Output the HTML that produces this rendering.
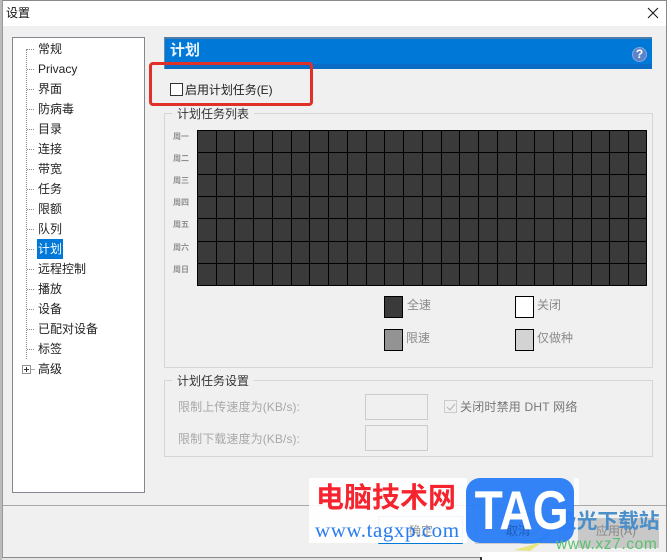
<!DOCTYPE html>
<html lang="zh"><head><meta charset="utf-8"><title>设置</title>
<style>
html,body{margin:0;padding:0;background:#fff}
#p{position:relative;width:671px;height:560px;overflow:hidden;background:#fff;font:12px/16px "Liberation Sans","Noto Sans CJK SC",sans-serif;color:#222}
#p div{position:absolute;white-space:nowrap}
.t{left:38px;height:16px}
.g{color:#a8a8a8}
.b{border:1px solid #d6d6d6;box-sizing:border-box}
.l{font-size:8px;line-height:10px;color:#909090;left:173px;font-weight:bold}
.sw{width:17px;height:20px;border:1px solid #000}
.lg{color:#8a8a8a}
</style></head><body><div id="p">
<div style="left:0;top:558px;width:480px;height:2px;background:#e4e4e4"></div>
<div style="left:2px;top:0;width:665px;height:558px;background:#f0f0f0;border:1px solid #8a8a8a;border-left-color:#999;box-sizing:border-box"></div>
<div style="left:3px;top:1px;width:663px;height:25px;background:#fff"></div>
<div style="left:0;top:0;width:2px;height:560px;background:#bbb"></div>
<div style="left:6px;top:5px;font-size:12px;color:#111">设置</div>
<svg style="position:absolute;left:647px;top:7px" width="12" height="12"><path d="M1 1L11 11M11 1L1 11" stroke="#111" stroke-width="1" fill="none"/></svg>

<div style="left:12px;top:37px;width:133px;height:456px;background:#fff;border:1px solid #828790;box-sizing:border-box"></div>
<div style="left:26px;top:49px;height:310px;border-left:1px dotted #888"></div>
<div class="t" style="top:41px">常规</div>
<div class="t" style="top:61px">Privacy</div>
<div class="t" style="top:81px">界面</div>
<div class="t" style="top:101px">防病毒</div>
<div class="t" style="top:121px">目录</div>
<div class="t" style="top:141px">连接</div>
<div class="t" style="top:161px">带宽</div>
<div class="t" style="top:181px">任务</div>
<div class="t" style="top:201px">限额</div>
<div class="t" style="top:221px">队列</div>
<div style="left:37px;top:239px;width:26px;height:20px;background:#0078d7"></div>
<div class="t" style="top:241px;color:#fff">计划</div>
<div class="t" style="top:261px">远程控制</div>
<div class="t" style="top:281px">播放</div>
<div class="t" style="top:301px">设备</div>
<div class="t" style="top:321px">已配对设备</div>
<div class="t" style="top:341px">标签</div>
<div class="t" style="top:361px">高级</div>
<svg style="position:absolute;left:26px;top:49px" width="10" height="312"><path d="M1 .5H9M1 20.5H9M1 40.5H9M1 60.5H9M1 80.5H9M1 100.5H9M1 120.5H9M1 140.5H9M1 160.5H9M1 180.5H9M1 200.5H9M1 220.5H9M1 240.5H9M1 260.5H9M1 280.5H9M1 300.5H9" stroke="#888" stroke-dasharray="1 1" fill="none"/></svg>
<div style="left:22px;top:365px;width:9px;height:9px;background:#fff;border:1px solid #919191;box-sizing:border-box"></div>
<div style="left:24px;top:369px;width:5px;height:1px;background:#333"></div>
<div style="left:26px;top:367px;width:1px;height:5px;background:#333"></div>
<div style="left:31px;top:369px;width:4px;height:1px;background:#aaa"></div>

<div style="left:164px;top:37px;width:488px;height:32px;background:#0078d7;border-top:2px solid #4d7da6;border-left:1px solid #6b8aa5;box-sizing:border-box"></div>
<div style="left:165px;top:64px;width:487px;height:5px;background:#0a6cc4"></div>
<div style="left:170px;top:42px;font-size:15px;line-height:18px;font-weight:bold;color:#e8f3fc">计划</div>
<div style="left:632px;top:47px;width:13px;height:13px;border-radius:50%;background:#5c83c9;border:1px solid #8aa9dc;color:#fff;font:bold 12px/13px 'Liberation Sans',sans-serif;text-align:center">?</div>

<div style="left:170px;top:83px;width:13px;height:13px;background:#fff;border:1px solid #333;box-sizing:border-box"></div>
<div style="left:185px;top:82px;color:#222;letter-spacing:-.05px">启用计划任务(E)</div>
<div style="left:149px;top:62px;width:164px;height:44px;border:3px solid #e0302a;border-radius:4px;box-sizing:border-box"></div>

<div class="b" style="left:164px;top:113px;width:489px;height:255px"></div>
<div style="left:172px;top:106px;background:#f0f0f0;padding:0 5px;color:#333">计划任务列表</div>
<div class="l" style="top:132px">周一</div>
<div class="l" style="top:154px">周二</div>
<div class="l" style="top:176px">周三</div>
<div class="l" style="top:198px">周四</div>
<div class="l" style="top:220px">周五</div>
<div class="l" style="top:243px">周六</div>
<div class="l" style="top:265px">周日</div>
<svg style="position:absolute;left:197px;top:130px" width="451" height="157" shape-rendering="crispEdges">
<rect x="0" y="0" width="450" height="156" fill="#3a3a3a"/>
<path d="M.5 0V156M19.5 0V156M37.5 0V156M56.5 0V156M75.5 0V156M94.5 0V156M112.5 0V156M131.5 0V156M150.5 0V156M169.5 0V156M187.5 0V156M206.5 0V156M225.5 0V156M244.5 0V156M262.5 0V156M281.5 0V156M300.5 0V156M319.5 0V156M337.5 0V156M356.5 0V156M375.5 0V156M394.5 0V156M412.5 0V156M431.5 0V156M449.5 0V156M0 .5H450M0 22.5H450M0 44.5H450M0 66.5H450M0 88.5H450M0 111.5H450M0 133.5H450M0 155.5H450" stroke="#000" fill="none"/>
</svg>

<div class="sw" style="left:384px;top:296px;background:#3a3a3a"></div>
<div class="lg" style="left:407px;top:297px">全速</div>
<div class="sw" style="left:515px;top:296px;background:#fff"></div>
<div class="lg" style="left:537px;top:297px">关闭</div>
<div class="sw" style="left:384px;top:329px;background:#939393"></div>
<div class="lg" style="left:406px;top:330px">限速</div>
<div class="sw" style="left:515px;top:329px;background:#d3d3d3"></div>
<div class="lg" style="left:537px;top:330px">仅做种</div>

<div class="b" style="left:164px;top:380px;width:489px;height:77px"></div>
<div style="left:172px;top:373px;background:#f0f0f0;padding:0 5px;color:#333">计划任务设置</div>
<div class="g" style="left:178px;top:399px;letter-spacing:.1px">限制上传速度为(KB/s):</div>
<div class="g" style="left:178px;top:431px;letter-spacing:.1px">限制下载速度为(KB/s):</div>
<div class="b" style="left:365px;top:394px;width:63px;height:26px;border-color:#ccc"></div>
<div class="b" style="left:365px;top:425px;width:63px;height:26px;border-color:#ccc"></div>
<div class="b" style="left:444px;top:400px;width:13px;height:13px;border-color:#ccc"></div>
<svg style="position:absolute;left:445px;top:401px" width="12" height="12"><path d="M2 6L5 9L10 3" stroke="#b5b5b5" fill="none"/></svg>
<div style="left:460px;top:399px;color:#777;letter-spacing:.2px">关闭时禁用 DHT 网络</div>

<div style="left:3px;top:505px;width:663px;height:1px;background:#a8a8a8"></div>
<div style="left:378px;top:516px;width:85px;height:28px;border:1px solid #7eb4d8;border-bottom:1px solid #0078d7;box-sizing:border-box"></div>
<div style="left:475px;top:516px;width:85px;height:28px;border:1px solid #ccc;box-sizing:border-box"></div>
<div style="left:578px;top:518px;width:81px;height:30px;background:#c8c8c8"></div>
<div style="left:596px;top:523px;color:#888">应用(A)</div>

<div style="left:309px;top:478px;width:158px;height:65px;background:rgba(255,255,255,.88)"></div>
<div style="left:574px;top:478px;width:5px;height:27px;background:rgba(255,255,255,.8)"></div>
<div style="left:409px;top:523px;color:#999">确定</div>
<div style="left:480px;top:552px;width:191px;height:8px;background:#fff"></div>
<div style="left:480px;top:557px;width:2px;height:3px;background:#333"></div>
<svg style="position:absolute;left:500px;top:510px" width="70" height="45"><ellipse cx="28" cy="18" rx="22" ry="14" fill="none" stroke="#7fb0d8" stroke-width="4"/><ellipse cx="28" cy="18" rx="11" ry="6" fill="none" stroke="#7fb0d8" stroke-width="2"/><path d="M14 40L42 32L30 41Z" fill="#e6e67a"/></svg>
<div style="left:556px;top:509px;font:bold 20.7px/26px 'Liberation Sans','Noto Sans CJK SC',sans-serif;color:#4a8fc9;width:110px;overflow:hidden">极光下载站</div>
<div style="left:466px;top:478px;width:108px;height:65px;background:rgba(43,126,246,.96);border-radius:14px"></div>
<div style="left:506px;top:523px;color:#1d5cb8">取消</div>
<div style="left:316px;top:482px;font:bold 28px/32px 'Liberation Sans','Noto Sans CJK SC',sans-serif;color:#f5242e">电脑技术网</div>
<div style="left:315px;top:517px;font:21px/26px 'Liberation Serif',serif;color:#2a7cf0;letter-spacing:.55px">www.tagxp.com</div>
<div style="left:466px;top:477px;width:108px;font:bold 55px/66px 'Liberation Sans',sans-serif;color:#fff;text-align:center;transform:scaleX(.84)">TAG</div>
<div style="left:556px;top:536px;font:15.5px/18px 'Liberation Sans',sans-serif;color:#5cc06e;letter-spacing:.6px">www.xz7.com</div>
</div></body></html>
